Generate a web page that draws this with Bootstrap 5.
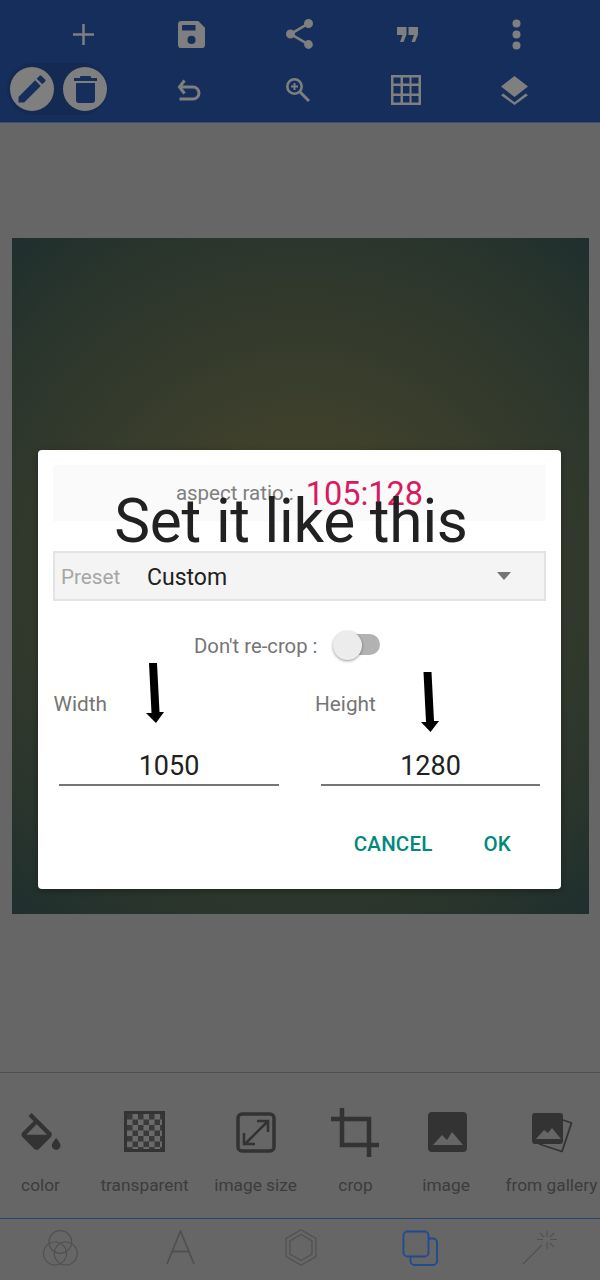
<!DOCTYPE html>
<html lang="en">
<head>
<meta charset="utf-8">
<title>Canvas size</title>
<link href="https://cdn.jsdelivr.net/npm/bootstrap@5.3.0/dist/css/bootstrap.min.css" rel="stylesheet">
<style>
html,body{margin:0;height:1280px;overflow:hidden}
body{font-family:Roboto,"Liberation Sans",sans-serif;background:#666}
.app-shell{position:relative;width:600px;height:1280px;background:#666;overflow:hidden}
.top-bar{height:123px;background:#162e5c;border-bottom:1px solid #3a4f75;padding-top:6px}
.tool-row{height:56px}
.tool-cell{display:flex;justify-content:center;align-items:center}
.row-one{padding-left:29px}
.row-one .tool-cell{width:108.25px}
.row-two{padding-left:135px}
.row-two .tool-cell{width:108.5px}
.tool-row svg{fill:#7f7f7f;display:block}
.tool-row svg.line-glyph{fill:none;stroke:#7f7f7f}
.mode-pill{position:absolute;left:7px;top:63px;width:101px;height:52px;border-radius:26px;background:#142a53;display:flex;align-items:center;gap:9px;padding-left:3px}
.mode-btn{width:44px;height:44px;border-radius:50%;background:#7f7f7f;display:flex;align-items:center;justify-content:center}
.mode-btn svg{fill:#162e5c;display:block}
.stage{height:949px;padding:115px 11px 0 12px}
.art-board{height:676px;background:radial-gradient(circle 445px at 50% 50%,#46462c 0,#40412c 28%,#2c362c 75%,#1f2f2e 100%)}
.tool-tray{height:147px;border-top:1px solid #4f4f4f;border-bottom:1px solid #254674;position:relative}
.tray-glyph{display:block;position:absolute}
.tray-label{position:absolute;top:102px;font-size:17.3px;line-height:20px;color:#3c3c3c;white-space:nowrap;transform:translateX(-50%)}
.tab-bar{height:61px;position:relative}
.tab-glyph{position:absolute;fill:none;stroke:#505050;stroke-linejoin:round}
.dlg{position:absolute;left:38px;top:450px;width:523px;height:439px;background:#fff;border-radius:4px;box-shadow:0 2px 6px rgba(0,0,0,.3)}
.ratio-band{position:absolute;left:15px;top:15px;width:493px;height:56px;background:#fafafa;display:flex;justify-content:center;align-items:center;gap:12px}
.ratio-label{font-size:20.500px;color:#808080}
.ratio-value{font-size:32.500px;color:#d81b60;line-height:56px;transform:translateY(1px)}
.note-text{position:absolute;left:0;top:37px;width:506px;text-align:center;font-size:60.300px;line-height:70px;color:#212121;white-space:nowrap;letter-spacing:-.2px}
.preset-box{position:absolute;left:15px;top:101px;width:493px;height:50px;background:#f4f4f4;border:2px solid #e3e3e3;display:flex;align-items:center}
.preset-key{font-size:20.700px;color:#a6a6a6;margin-left:6px;width:86px;padding-top:4px}
.preset-val{font-size:23px;color:#212121;flex:1;padding-top:5px}
.preset-caret{width:0;height:0;border-left:7.500px solid transparent;border-right:7.500px solid transparent;border-top:8px solid #757575;margin-right:33px;margin-top:-1px}
.crop-row{position:absolute;left:156px;top:181px;height:30px;display:flex;align-items:center;gap:15px}
.crop-label{font-size:20.300px;color:#757575}
.fake-switch{position:relative;width:47px;height:30px}
.fake-track{position:absolute;left:6px;top:3px;width:41px;height:21px;border-radius:11px;background:#b2b2b2}
.fake-thumb{position:absolute;left:0;top:0;width:29px;height:29px;border-radius:50%;background:#ececec;box-shadow:0 1px 3px rgba(0,0,0,.4)}
.size-col{position:absolute;top:240px}
.size-label{font-size:20.800px;line-height:28px;color:#757575}
.size-input{position:absolute;top:292px;height:44px;border-bottom:2px solid #757575;text-align:center;font-size:27px;line-height:48px;color:#212121}
.dlg-actions{position:absolute;top:379px;right:0;display:flex}
.dlg-btn{font-size:20.500px;line-height:30px;font-weight:500;color:#00897b;letter-spacing:.2px;padding:0;border:0;background:none;border-radius:0}
.arrow-mark{position:absolute;display:block}
</style>
</head>
<body>
<div class="app-shell">
  <div class="top-bar">
    <div class="tool-row row-one d-flex">
      <div class="tool-cell"><svg width="21" height="21" viewBox="0 0 21 21"><path d="M9.250 0h2.500v9.250H21v2.500h-9.250V21h-2.500v-9.250H0v-2.500h9.250z"/></svg></div>
      <div class="tool-cell"><svg width="27" height="27" viewBox="2 2 20 20"><path d="M17 2H4.500A2.500 2.500 0 0 0 2 4.500V19.500A2.500 2.500 0 0 0 4.500 22h15a2.500 2.500 0 0 0 2.500-2.500V7zM12 19a3 3 0 1 1 0-6 3 3 0 0 1 0 6zm3-10H5V5h10z"/></svg></div>
      <div class="tool-cell"><svg width="29" height="30" viewBox="3 2 18 20"><path d="M18 16.080c-.76 0-1.440.3-1.960.77L8.910 12.700c.05-.23.090-.46.090-.7s-.04-.47-.09-.7l7.050-4.110c.54.500 1.250.81 2.040.81a3 3 0 1 0-3-3c0 .24.040.47.090.7L8.040 9.810A3 3 0 1 0 8.040 14.190l7.120 4.160c-.05.210-.08.430-.08.650a2.920 2.920 0 1 0 2.920-2.920z"/></svg></div>
      <div class="tool-cell"><svg width="21" height="15" viewBox="0 0 21 15"><path d="M0 0h9.500v7.500L6.500 15H3l2.500-7H0zM11.500 0H21v7.500L18 15h-3.500l2.500-7h-5.500z"/></svg></div>
      <div class="tool-cell"><svg width="9" height="31" viewBox="0 0 9 31"><circle cx="4.500" cy="4.500" r="4"/><circle cx="4.500" cy="15.500" r="4"/><circle cx="4.500" cy="26.500" r="4"/></svg></div>
    </div>
    <div class="tool-row row-two d-flex">
      <div class="tool-cell"><svg class="line-glyph" width="24" height="24" viewBox="0 0 24 24" stroke-width="3"><path d="M7.500 2.500 2.500 9l5 6.500M2.500 9H16a6 6 0 0 1 0 12H2.500"/></svg></div>
      <div class="tool-cell"><svg class="line-glyph" width="24" height="24" viewBox="0 0 24 24"><circle cx="8.500" cy="8.500" r="7.200" stroke-width="2.600"/><path d="M13.800 13.800 23 23" stroke-width="3"/><path d="M8.500 5v7M5 8.500h7" stroke-width="1.900"/></svg></div>
      <div class="tool-cell"><svg width="30" height="30" viewBox="0 0 30 30"><path fill-rule="evenodd" d="M0 0h30v30H0zM2.500 2.500v6h7v-6zm9.500 0v6h6.500v-6zm8.500 0v6h7v-6zM2.500 11v7.500h7V11zm9.500 0v7.500h6.500V11zm8.500 0v7.500h7V11zM2.500 21v6.500h7V21zm9.500 0v6.500h6.500V21zm8.500 0v6.500h7V21z"/></svg></div>
      <div class="tool-cell"><svg width="27" height="29" viewBox="0 0 27 29"><path d="M13.500 0 27 10.500 13.500 21 0 10.500zM2.300 17.500l11.200 8.700 11.200-8.700L27 19.300 13.500 29 0 19.300z"/></svg></div>
    </div>
  </div>
  <div class="mode-pill">
    <div class="mode-btn"><svg width="36" height="36" viewBox="0 0 24 24"><path d="M3 17.250V21h3.750L17.810 9.940l-3.750-3.750zM20.710 7.040c.39-.39.39-1.020 0-1.410l-2.340-2.340c-.39-.39-1.020-.39-1.410 0l-1.830 1.830 3.750 3.750z"/></svg></div>
    <div class="mode-btn"><svg width="23" height="27" viewBox="0 0 23 27"><path d="M7 0h9a1 1 0 0 1 1 1v1h6v3H0V2h6V1a1 1 0 0 1 1-1zM2 7h19v17a3 3 0 0 1-3 3H5a3 3 0 0 1-3-3z"/></svg></div>
  </div>
  <div class="stage"><div class="art-board"></div></div>
  <div class="tool-tray">
    <svg class="tray-glyph" style="left:15px;top:40px" width="52" height="52" viewBox="0 0 24 24"><path fill="#333" d="M16.560 8.940 7.620 0 6.210 1.410l2.380 2.380-5.150 5.150c-.59.590-.59 1.540 0 2.120l5.500 5.500c.29.290.68.440 1.060.440s.77-.150 1.060-.440l5.500-5.500c.59-.580.590-1.530 0-2.120zM5.210 10 10 5.210 14.790 10zM19 11.500s-2 2.170-2 3.500c0 1.100.9 2 2 2s2-.9 2-2c0-1.330-2-3.500-2-3.500z"/></svg>
    <svg class="tray-glyph" style="left:124px;top:38px" width="41" height="41" viewBox="0 0 41 41"><defs><pattern id="chk" width="11" height="11" patternUnits="userSpaceOnUse" x="3" y="3"><rect width="11" height="11" fill="#6a6a6a"/><rect width="5.500" height="5.500" fill="#3a3a3a"/><rect x="5.500" y="5.500" width="5.500" height="5.500" fill="#3a3a3a"/></pattern></defs><rect width="41" height="41" fill="#333"/><rect x="3" y="3" width="35" height="35" fill="url(#chk)"/></svg>
    <svg class="tray-glyph" style="left:236px;top:39px" width="40" height="41" viewBox="0 0 40 41"><rect x="2" y="2" width="36" height="37" rx="4" fill="none" stroke="#333" stroke-width="3.500"/><path d="M9 32 31 10M21 9h11v11M8 21v11h11" fill="none" stroke="#333" stroke-width="2.600"/></svg>
    <svg class="tray-glyph" style="left:331px;top:35px" width="48" height="49" viewBox="0 0 48 49"><path d="M11 0v37h37M0 11h38v38" fill="none" stroke="#333" stroke-width="4.500"/></svg>
    <svg class="tray-glyph" style="left:427.500px;top:39px" width="39" height="40" viewBox="0 0 39 40"><path fill="#333" fill-rule="evenodd" d="M4 0h31a4 4 0 0 1 4 4v32a4 4 0 0 1-4 4H4a4 4 0 0 1-4-4V4a4 4 0 0 1 4-4zM5 33h30L24 20l-5 8-5-5z"/></svg>
    <svg class="tray-glyph" style="left:531.500px;top:39px" width="41" height="41" viewBox="0 0 41 41"><path d="M31 8l8.500 3L30 39.500 7 32" fill="none" stroke="#333" stroke-width="1.800" stroke-linejoin="round"/><path fill="#333" fill-rule="evenodd" d="M3 1h25a3 3 0 0 1 3 3v25a3 3 0 0 1-3 3H3a3 3 0 0 1-3-3V4a3 3 0 0 1 3-3zM4 27h25l-9-11-4 5-4-3z"/></svg>
    <span class="tray-label" style="left:40.500px">color</span>
    <span class="tray-label" style="left:144.500px">transparent</span>
    <span class="tray-label" style="left:255.500px">image size</span>
    <span class="tray-label" style="left:355.500px">crop</span>
    <span class="tray-label" style="left:446px">image</span>
    <span class="tray-label" style="left:551.500px">from gallery</span>
  </div>
  <div class="tab-bar">
    <svg class="tab-glyph" style="left:43px;top:10.500px" width="35" height="36" viewBox="0 0 35 36" stroke-width="1.200"><circle cx="17.300" cy="12" r="11.300"/><circle cx="12" cy="23.500" r="11.500"/><circle cx="22.800" cy="23.500" r="11.500"/></svg>
    <svg class="tab-glyph" style="left:165.500px;top:11px" width="29" height="35" viewBox="0 0 29 35" stroke-width="1.800"><path d="M1 34 14.500 1 28 34M6 21.500h17"/></svg>
    <svg class="tab-glyph" style="left:283.500px;top:10px" width="34" height="37" viewBox="0 0 34 37" stroke-width="1.200"><path d="M17 .8 32 9.500v18L17 36.200 2 27.500v-18z"/><path d="M17 5.500 28 11.800v13.400L17 31.500 6 25.200V11.800z"/></svg>
    <svg class="tab-glyph" style="left:402px;top:10.500px;stroke:#1f4b8f" width="36" height="36" viewBox="0 0 36 36" stroke-width="1.800"><rect x="1.500" y="1.500" width="25" height="25" rx="4"/><path d="M26.500 8.500H31a4 4 0 0 1 4 4V31a4 4 0 0 1-4 4H12.500a4 4 0 0 1-4-4v-4.500"/></svg>
    <svg class="tab-glyph" style="left:522px;top:11px" width="36" height="36" viewBox="0 0 36 36" stroke-width="1.200"><path d="M1 34 20 15M25 1v6M25 12v7M15 9.500h6M28 9.500h7M18 3l4 4M32 3l-4 4M32 17l-4-4"/></svg>
  </div>

  <div class="dlg">
    <div class="ratio-band"><span class="ratio-label">aspect ratio :</span><span class="ratio-value">105:128</span></div>
    <div class="note-text">Set it like this</div>
    <div class="preset-box"><span class="preset-key">Preset</span><span class="preset-val">Custom</span><span class="preset-caret"></span></div>
    <div class="crop-row"><span class="crop-label">Don't re-crop :</span><span class="fake-switch"><span class="fake-track"></span><span class="fake-thumb"></span></span></div>
    <div class="size-col" style="left:15.500px"><div class="size-label">Width</div></div>
    <div class="size-col" style="left:277px"><div class="size-label">Height</div></div>
    <div class="size-input" style="left:21px;width:220px">1050</div>
    <div class="size-input" style="left:283px;width:219px">1280</div>
    <svg class="arrow-mark" style="left:108px;top:213px" width="18" height="60" viewBox="0 0 18 60"><path d="M3 0h8l2.500 49H18L10 60 0 50h5.500z"/></svg>
    <svg class="arrow-mark" style="left:383px;top:222px" width="18" height="60" viewBox="0 0 18 60"><path d="M2.500 0h8L13 49h5L9.500 60 0 50h5z"/></svg>
    <div class="dlg-actions"><button class="btn dlg-btn" style="margin-right:51px">CANCEL</button><button class="btn dlg-btn" style="margin-right:50px">OK</button></div>
  </div>
</div>
<script src="https://cdn.jsdelivr.net/npm/bootstrap@5.3.0/dist/js/bootstrap.bundle.min.js"></script>
</body>
</html>
